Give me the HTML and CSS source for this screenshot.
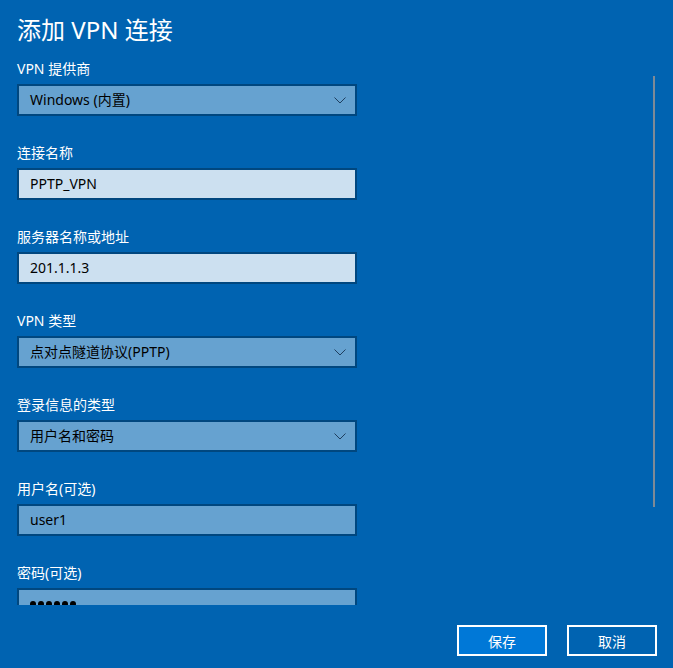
FILE: index.html
```
<!DOCTYPE html>
<html lang="zh-CN">
<head>
<meta charset="utf-8">
<title>添加 VPN 连接</title>
<link rel="stylesheet" href="styles.css">
</head>
<body>
<div class="page">
  <h1 class="title">添加 VPN 连接</h1>
  <div class="scroll">
    <div class="field">
      <div class="label">VPN 提供商</div>
      <div class="box combo"><span>Windows (内置)</span><svg class="chev" width="12" height="7" viewBox="0 0 12 7"><path d="M0.5 0.5 L6 6 L11.5 0.5" fill="none" stroke="#1f3f5f" stroke-width="1"/></svg></div>
    </div>
    <div class="field">
      <div class="label">连接名称</div>
      <div class="box text light"><span>PPTP_VPN</span></div>
    </div>
    <div class="field">
      <div class="label">服务器名称或地址</div>
      <div class="box text light"><span>201.1.1.3</span></div>
    </div>
    <div class="field">
      <div class="label">VPN 类型</div>
      <div class="box combo"><span>点对点隧道协议(PPTP)</span><svg class="chev" width="12" height="7" viewBox="0 0 12 7"><path d="M0.5 0.5 L6 6 L11.5 0.5" fill="none" stroke="#1f3f5f" stroke-width="1"/></svg></div>
    </div>
    <div class="field">
      <div class="label">登录信息的类型</div>
      <div class="box combo"><span>用户名和密码</span><svg class="chev" width="12" height="7" viewBox="0 0 12 7"><path d="M0.5 0.5 L6 6 L11.5 0.5" fill="none" stroke="#1f3f5f" stroke-width="1"/></svg></div>
    </div>
    <div class="field">
      <div class="label">用户名(可选)</div>
      <div class="box text"><span>user1</span></div>
    </div>
    <div class="field">
      <div class="label">密码(可选)</div>
      <div class="box text"><span class="dots"><i></i><i></i><i></i><i></i><i></i><i></i></span></div>
    </div>
    <div class="scrollbar"></div>
  </div>
  <div class="footer">
    <button class="btn primary">保存</button>
    <button class="btn">取消</button>
  </div>
</div>
</body>
</html>
```
FILE: styles.css
```
html, body {
  margin: 0;
  padding: 0;
  background: #0063b1;
}
body {
  font-family: "Segoe UI", "Noto Sans", "Noto Sans CJK SC", sans-serif;
  color: #ffffff;
}
.page {
  width: 673px;
  height: 668px;
  display: flex;
  flex-direction: column;
  overflow: hidden;
}
.title {
  margin: 0;
  padding: 14px 0 0 17px;
  height: 32px;
  font-size: 24px;
  line-height: 32px;
  font-weight: normal;
}
.scroll {
  position: relative;
  height: 546px;
  padding-top: 13px;
  overflow: hidden;
  padding-left: 17px;
  display: flex;
  flex-direction: column;
}
.field {
  display: flex;
  flex-direction: column;
  gap: 5px;
  margin-bottom: 27px;
  flex: none;
}
.label {
  font-size: 14px;
  line-height: 20px;
  height: 20px;
}
.box {
  box-sizing: border-box;
  width: 340px;
  height: 32px;
  border: 2px solid #00477f;
  background: #66a2d0;
  color: #000000;
  font-size: 14px;
  display: flex;
  align-items: center;
  padding-left: 11px;
  padding-right: 9px;
}
.box span {
  flex: 1;
  line-height: 20px;
}
.box.light {
  background: #cce0f0;
}
.chev {
  flex: none;
}
.dots {
  display: flex;
  gap: 2px;
}
.dots i {
  display: block;
  width: 6px;
  height: 6px;
  border-radius: 50%;
  background: #000;
}
.scrollbar {
  position: absolute;
  left: 653px;
  top: 30px;
  width: 2px;
  height: 431px;
  background: #7e8a96;
}
.footer {
  display: flex;
  justify-content: flex-end;
  gap: 20px;
  padding: 20px 16px 0 0;
}
.btn {
  box-sizing: border-box;
  width: 90px;
  height: 31px;
  border: 2px solid #ffffff;
  background: #0063b1;
  color: #ffffff;
  font-family: "Segoe UI", "Noto Sans", "Noto Sans CJK SC", sans-serif;
  font-size: 14px;
  padding: 0;
}
.btn.primary {
  background: #0078d7;
}
```
